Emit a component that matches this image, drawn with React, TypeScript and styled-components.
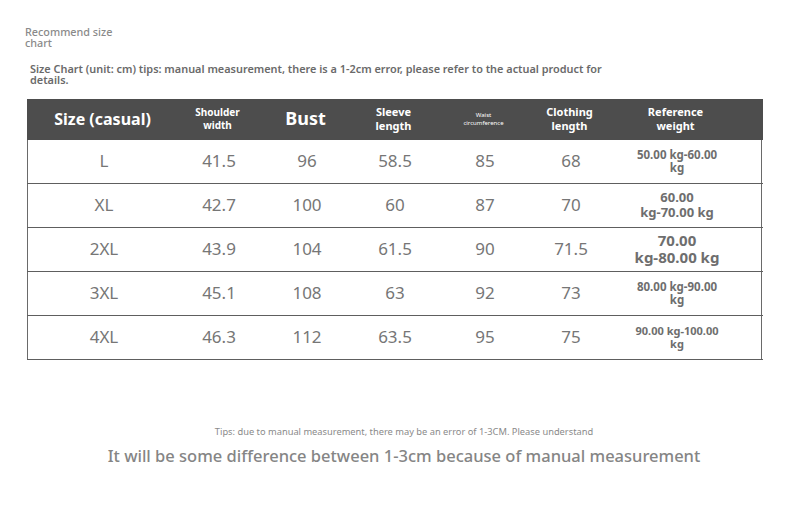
import React from "react";
import styled, { createGlobalStyle } from "styled-components";

const GlobalStyle = createGlobalStyle`
  body {
    margin: 0;
    background: #ffffff;
    font-family: "Noto Sans", "Open Sans", sans-serif;
  }
`;

type Row = {
  size: string;
  shoulder: string;
  bust: string;
  sleeve: string;
  waist: string;
  length: string;
  weight: [string, string];
  weightSize: number;
};

const rows: Row[] = [
  { size: "L", shoulder: "41.5", bust: "96", sleeve: "58.5", waist: "85", length: "68", weight: ["50.00 kg-60.00", "kg"], weightSize: 11.5 },
  { size: "XL", shoulder: "42.7", bust: "100", sleeve: "60", waist: "87", length: "70", weight: ["60.00", "kg-70.00 kg"], weightSize: 13 },
  { size: "2XL", shoulder: "43.9", bust: "104", sleeve: "61.5", waist: "90", length: "71.5", weight: ["70.00", "kg-80.00 kg"], weightSize: 15 },
  { size: "3XL", shoulder: "45.1", bust: "108", sleeve: "63", waist: "92", length: "73", weight: ["80.00 kg-90.00", "kg"], weightSize: 11.5 },
  { size: "4XL", shoulder: "46.3", bust: "112", sleeve: "63.5", waist: "95", length: "75", weight: ["90.00 kg-100.00", "kg"], weightSize: 11 },
];

function App() {
  return (
    <Page>
      <GlobalStyle />
      <Title>Recommend size chart</Title>
      <Note>
        Size Chart (unit: cm) tips: manual measurement, there is a 1-2cm error, please refer to the actual product for
        details.
      </Note>
      <Table>
        <HeadRow>
          <HeadCell $size={16}>Size (casual)</HeadCell>
          <HeadCell $size={10}>Shoulder<br />width</HeadCell>
          <HeadCell $size={18}>Bust</HeadCell>
          <HeadCell $size={11}>Sleeve<br />length</HeadCell>
          <HeadCell $size={6} $light>Waist<br />circumference</HeadCell>
          <HeadCell $size={11}>Clothing<br />length</HeadCell>
          <HeadCell $size={11} $last>Reference<br />weight</HeadCell>
        </HeadRow>
        {rows.map((r) => (
          <BodyRow key={r.size}>
            <Cell>{r.size}</Cell>
            <Cell>{r.shoulder}</Cell>
            <Cell>{r.bust}</Cell>
            <Cell>{r.sleeve}</Cell>
            <Cell>{r.waist}</Cell>
            <Cell>{r.length}</Cell>
            <WeightCell $size={r.weightSize}>
              {r.weight[0]}
              <br />
              {r.weight[1]}
            </WeightCell>
          </BodyRow>
        ))}
      </Table>
      <Footer>
        <SmallTip>Tips: due to manual measurement, there may be an error of 1-3CM. Please understand</SmallTip>
        <BigTip>It will be some difference between 1-3cm because of manual measurement</BigTip>
      </Footer>
    </Page>
  );
}

export default App;

const Page = styled.div`
  width: 790px;
  height: 520px;
  padding: 26px 0 0 0;
  box-sizing: border-box;
  overflow: hidden;
`;

const Title = styled.div`
  width: 100px;
  margin-left: 25px;
  font-size: 10.8px;
  line-height: 11px;
  font-weight: 500;
  color: #8a8a8a;
`;

const Note = styled.div`
  width: 600px;
  margin: 15px 0 0 30px;
  font-size: 10.9px;
  line-height: 11px;
  font-weight: 600;
  color: #6a6a6a;
`;

const columns = "152px 78px 98px 78px 102px 70px 157px";

const Table = styled.div`
  width: 735px;
  margin: 14px 0 0 27px;
  border-left: 1.5px solid #6a6a6a;
  border-right: 1.5px solid #6a6a6a;
  box-sizing: border-box;
`;

const HeadRow = styled.div`
  display: grid;
  grid-template-columns: ${columns};
  height: 41px;
  margin: 0 -1.5px;
  background: #4d4d4d;
  color: #ffffff;
`;

const HeadCell = styled.div<{ $size: number; $light?: boolean; $last?: boolean }>`
  display: flex;
  align-items: center;
  justify-content: center;
  text-align: center;
  font-size: ${(p) => p.$size}px;
  line-height: ${(p) => Math.round(p.$size * 1.25)}px;
  font-weight: ${(p) => (p.$light ? 400 : 700)};
  padding-right: ${(p) => (p.$last ? "15px" : "0")};
  padding-bottom: 2px;
`;

const BodyRow = styled.div`
  display: grid;
  grid-template-columns: ${columns};
  height: 44px;
  margin: 0 -1.5px;
  box-sizing: border-box;
  border-bottom: 1.5px solid #5e5e5e;
  padding: 0 1.5px;
`;

const Cell = styled.div`
  display: flex;
  align-items: center;
  justify-content: center;
  font-size: 17px;
  color: #767676;
  padding-bottom: 2px;
`;

const WeightCell = styled.div<{ $size: number }>`
  display: flex;
  align-items: center;
  justify-content: center;
  text-align: center;
  padding-right: 15px;
  font-size: ${(p) => p.$size}px;
  line-height: ${(p) => Math.round(p.$size * 1.15)}px;
  font-weight: 700;
  color: #6e6e6e;
  padding-bottom: 2px;
`;

const Footer = styled.div`
  display: flex;
  flex-direction: column;
  align-items: center;
  margin-top: 66px;
  padding-left: 18px;
`;

const SmallTip = styled.div`
  font-size: 9.3px;
  line-height: 12px;
  color: #8a8a8a;
`;

const BigTip = styled.div`
  margin-top: 7px;
  font-size: 16.5px;
  line-height: 22px;
  font-weight: 500;
  color: #858585;
`;
